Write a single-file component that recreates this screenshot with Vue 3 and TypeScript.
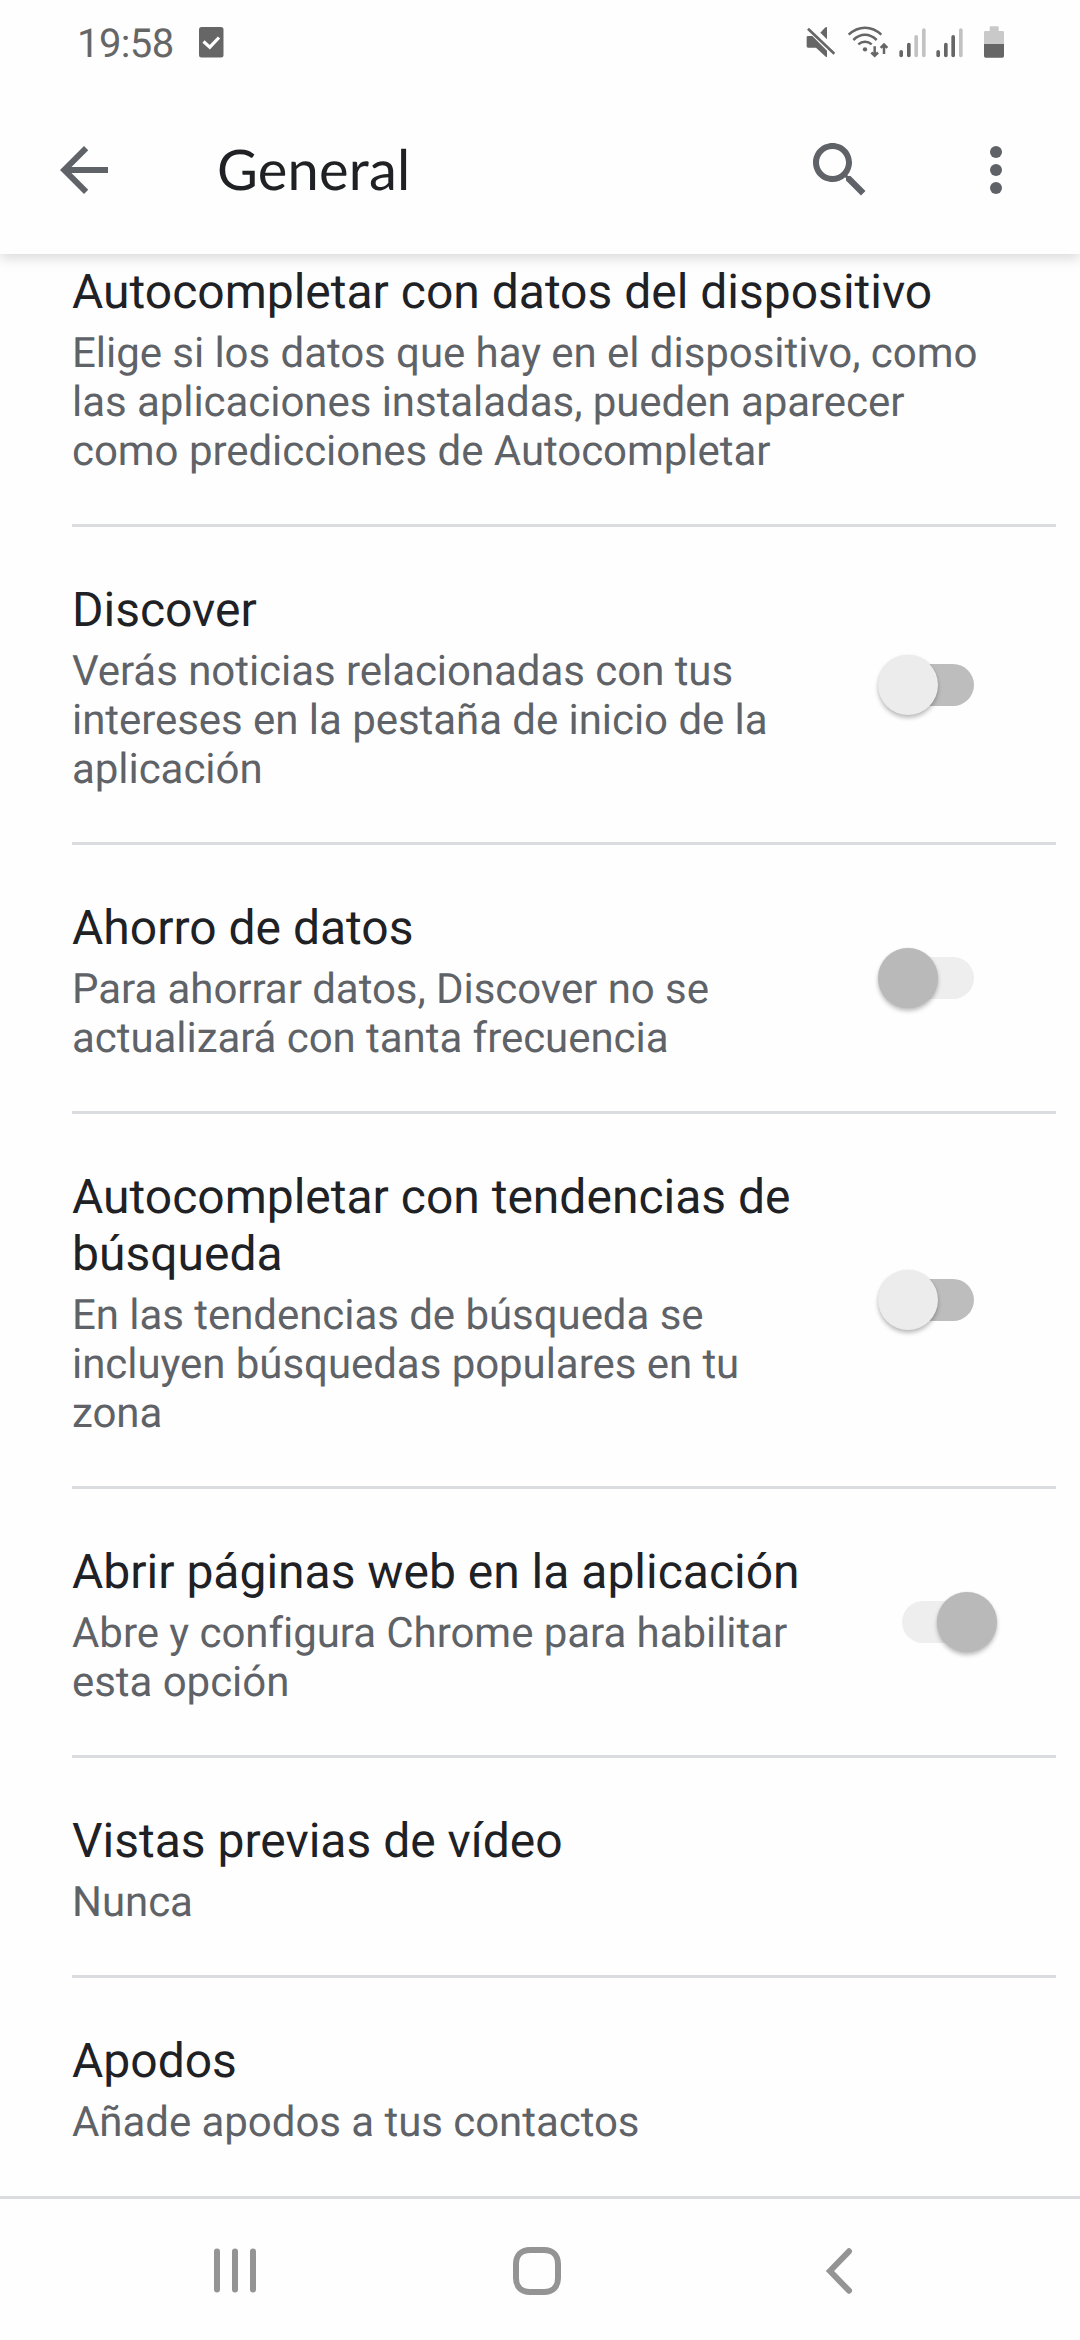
<script setup lang="ts">
interface Setting {
  title: string
  detail: string
  toggle?: 'off' | 'off-disabled' | 'on-disabled'
}

const settings: Setting[] = [
  {
    title: 'Autocompletar con datos del dispositivo',
    detail:
      'Elige si los datos que hay en el dispositivo, como las aplicaciones instaladas, pueden aparecer como predicciones de Autocompletar',
  },
  {
    title: 'Discover',
    detail: 'Verás noticias relacionadas con tus intereses en la pestaña de inicio de la aplicación',
    toggle: 'off',
  },
  {
    title: 'Ahorro de datos',
    detail: 'Para ahorrar datos, Discover no se actualizará con tanta frecuencia',
    toggle: 'off-disabled',
  },
  {
    title: 'Autocompletar con tendencias de búsqueda',
    detail: 'En las tendencias de búsqueda se incluyen búsquedas populares en tu zona',
    toggle: 'off',
  },
  {
    title: 'Abrir páginas web en la aplicación',
    detail: 'Abre y configura Chrome para habilitar esta opción',
    toggle: 'on-disabled',
  },
  { title: 'Vistas previas de vídeo', detail: 'Nunca' },
  { title: 'Apodos', detail: 'Añade apodos a tus contactos' },
]
</script>

<template>
  <div class="screen">
    <div class="status">
      <span class="clock">19:58</span>
      <svg class="task" width="25" height="31" viewBox="0 0 25 31">
        <rect width="24.5" height="30.5" rx="2.5" fill="#666" />
        <path d="M4.500 14.500L10.800 20.200L20 10.500" fill="none" stroke="#fff" stroke-width="3.200" />
      </svg>
      <svg class="indicators" width="200" height="34" viewBox="78 75 600 102">
        <g fill="#666">
          <path d="M80 112q0-4 4-4H97L141 152V171q-3 1-7-4L108 143H84q-4 0-4-4Z" />
          <path d="M121 98L134 84q7-6 7-1V118Z" />
          <circle cx="255" cy="148" r="6.500" />
        </g>
        <g fill="none" stroke="#666" stroke-width="7.500">
          <path d="M84 86L163 161" stroke-width="8" />
          <path d="M206 104Q228 83 255 83T304 104" />
          <path d="M220 120Q236 104.500 255 104.500T290 120" />
          <path d="M235 133Q244 125 255 125T275 133" />
          <path d="M284 139V167M274 157.500L284 167.500L294 157.500" />
          <path d="M312 162V134M302 143.500L312 133.500L322 143.500" />
        </g>
        <g fill="#666">
          <rect x="358" y="150" width="11" height="22" rx="5.500" />
          <rect x="381" y="128" width="11" height="44" rx="5.500" />
          <rect x="469" y="150" width="11" height="22" rx="5.500" />
          <rect x="492" y="128" width="11" height="44" rx="5.500" />
          <rect x="514" y="105" width="11" height="67" rx="5.500" />
        </g>
        <g fill="#c2c2c2">
          <rect x="403" y="105" width="11" height="67" rx="5.500" />
          <rect x="426" y="85" width="11" height="87" rx="5.500" />
          <rect x="537" y="85" width="11" height="87" rx="5.500" />
          <path d="M612 132V97q0-4 4-4H629V82q0-3 3-3H653q3 0 3 3V93H668q4 0 4 4V132Z" fill="#c9c9c9" />
        </g>
        <path d="M612 132H672V168q0 5-5 5H617q-5 0-5-5Z" fill="#666" />
      </svg>
    </div>

    <header class="bar">
      <svg class="icon" viewBox="0 0 24 24">
        <path d="M20 11H7.830l5.590-5.590L12 4l-8 8 8 8 1.410-1.410L7.830 13H20v-2z" />
      </svg>
      <h1>General</h1>
      <svg class="icon" viewBox="0 0 24 24">
        <path
          d="M15.500 14h-.79l-.28-.27C15.410 12.590 16 11.110 16 9.500 16 5.910 13.090 3 9.500 3S3 5.910 3 9.500 5.910 16 9.500 16c1.610 0 3.090-.59 4.230-1.570l.27.28v.79l5 4.990L20.490 19l-4.990-5zm-6 0C7.010 14 5 11.990 5 9.500S7.010 5 9.500 5 14 7.010 14 9.500 11.990 14 9.500 14z"
        />
      </svg>
      <svg class="icon more" viewBox="0 0 24 24">
        <circle cx="12" cy="6" r="2" />
        <circle cx="12" cy="12" r="2" />
        <circle cx="12" cy="18" r="2" />
      </svg>
    </header>

    <main class="list">
      <section v-for="s in settings" :key="s.title" class="row">
        <div class="texts" :class="{ narrow: s.toggle }">
          <h2>{{ s.title }}</h2>
          <p>{{ s.detail }}</p>
        </div>
        <div v-if="s.toggle" class="switch" :class="s.toggle">
          <span class="thumb"></span>
        </div>
      </section>
    </main>

    <nav class="nav">
      <svg width="44" height="48" viewBox="0 0 44 48">
        <path d="M4 4.500V42.500M22 4.500V42.500M40 4.500V42.500" stroke-width="6" stroke-linecap="round" />
      </svg>
      <svg class="home" width="48" height="48" viewBox="0 0 48 48">
        <path
          d="M17 3H31C40 3 45 8.500 45 17V31C45 39.500 40 45 31 45H17C8 45 3 39.500 3 31V17C3 8.500 8 3 17 3Z"
          stroke-width="6"
        />
      </svg>
      <svg width="28" height="48" viewBox="0 0 28 48">
        <path d="M24 4.300L5 24L24 43.700" stroke-width="6" stroke-linecap="round" />
      </svg>
    </nav>
  </div>
</template>

<style>
body {
  background: #fefefe;
}
</style>

<style scoped>
.screen {
  display: flex;
  flex-direction: column;
  width: 1080px;
  height: 2340px;
  overflow: hidden;
  background: #fefefe;
  font-family: Roboto, sans-serif;
  text-rendering: geometricPrecision;
}

.status {
  flex: none;
  display: flex;
  align-items: flex-start;
  height: 86px;
  box-sizing: border-box;
  padding: 25px 74px 0 77px;
}

.clock {
  width: 122px;
  margin-top: -5px;
  color: #666;
  font-size: 40px;
  letter-spacing: -0.6px;
  line-height: 47px;
}

.task {
  margin-top: 2px;
}

.indicators {
  margin-left: auto;
}

.bar {
  position: relative;
  z-index: 1;
  flex: none;
  display: flex;
  align-items: center;
  height: 168px;
  box-sizing: border-box;
  padding: 0 48px;
  background: #fefefe;
  box-shadow: 0 4px 12px rgba(0, 0, 0, 0.15);
  clip-path: inset(0 0 -24px 0);
}

.icon {
  width: 72px;
  height: 72px;
  fill: #5f6368;
}

h1 {
  flex: 1;
  margin: 0 0 3px 97px;
  color: #202124;
  font-family: Lato, sans-serif;
  font-size: 56px;
  font-weight: 400;
  letter-spacing: 0.2px;
  line-height: 72px;
}

.more {
  margin-left: 84px;
}

.list {
  flex: none;
  display: flex;
  flex-direction: column;
  justify-content: flex-end;
  height: 1945px;
  box-sizing: border-box;
  padding-bottom: 1px;
  border-bottom: 3px solid #dadce0;
}

.row {
  display: flex;
  align-items: center;
  justify-content: space-between;
  margin: 0 24px 0 72px;
  padding: 54px 0 45px;
}

.row + .row {
  border-top: 3px solid #dadce0;
}

.texts {
  width: 920px;
}

.narrow {
  width: 740px;
}

h2,
p {
  margin: 0;
  font-weight: 400;
}

h2 {
  color: #202124;
  font-size: 48px;
  line-height: 57px;
}

p {
  margin-top: 9px;
  padding-bottom: 3px;
  color: #5f6368;
  font-size: 42px;
  letter-spacing: -0.05px;
  line-height: 49px;
}

.switch {
  display: flex;
  align-items: center;
  flex: none;
  width: 84px;
  height: 42px;
  margin: -15px 82px -6px 0;
  border-radius: 21px;
  background: #bdbdbd;
}

.thumb {
  flex: none;
  width: 60px;
  height: 60px;
  margin-left: -12px;
  border-radius: 50%;
  background: #ececec;
  box-shadow: 0 3px 4px rgba(0, 0, 0, 0.25), 0 0 2px rgba(0, 0, 0, 0.08);
}

.off-disabled,
.on-disabled {
  background: #eee;
}

.off-disabled .thumb,
.on-disabled .thumb {
  background: #b9b9b9;
}

.on-disabled {
  margin-right: 70px;
}

.on-disabled .thumb {
  margin-left: 35px;
}

.nav {
  flex: 1;
  display: flex;
  align-items: center;
  justify-content: space-between;
  padding: 3px 227px 0 213px;
}

.nav svg {
  fill: none;
  stroke: #949494;
}

.home {
  margin-right: 8px;
}
</style>
